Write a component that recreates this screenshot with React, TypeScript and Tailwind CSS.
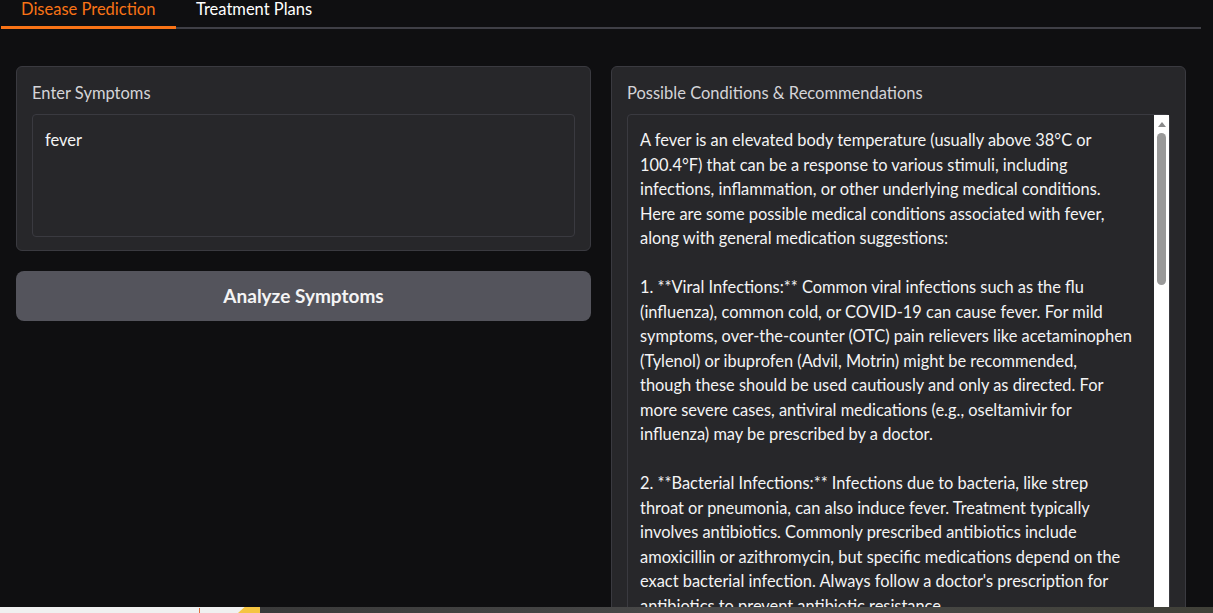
const lines1 = [
  "A fever is an elevated body temperature (usually above 38°C or",
  "100.4°F) that can be a response to various stimuli, including",
  "infections, inflammation, or other underlying medical conditions.",
  "Here are some possible medical conditions associated with fever,",
  "along with general medication suggestions:",
  "",
  "1. **Viral Infections:** Common viral infections such as the flu",
  "(influenza), common cold, or COVID-19 can cause fever. For mild",
  "symptoms, over-the-counter (OTC) pain relievers like acetaminophen",
  "(Tylenol) or ibuprofen (Advil, Motrin) might be recommended,",
  "though these should be used cautiously and only as directed. For",
  "more severe cases, antiviral medications (e.g., oseltamivir for",
  "influenza) may be prescribed by a doctor.",
  "",
  "2. **Bacterial Infections:** Infections due to bacteria, like strep",
  "throat or pneumonia, can also induce fever. Treatment typically",
  "involves antibiotics. Commonly prescribed antibiotics include",
  "amoxicillin or azithromycin, but specific medications depend on the",
  "exact bacterial infection. Always follow a doctor's prescription for",
  "antibiotics to prevent antibiotic resistance.",
];

export default function App() {
  return (
    <div className="relative h-[613px] w-[1213px] overflow-hidden bg-[#0f0f11] font-['Lato',sans-serif] text-[#f4f4f5]">
      {/* tabs */}
      <div className="ml-px mr-[12px] -mt-[4px] flex h-[33px] border-b-2 border-[#3f3f46]">
        <div className="-mb-[2px] w-[175px] border-b-[3px] border-[#f97316] pl-5 text-[16.5px] leading-[26px] text-[#f97316]">
          Disease Prediction
        </div>
        <div className="pl-5 text-[16.5px] leading-[26px] text-white">Treatment Plans</div>
      </div>

      <div className="mt-[37px] flex gap-[20px] px-4">
        {/* left column */}
        <div className="flex w-[575px] flex-col gap-[20px]">
          <div className="rounded-md border border-[#3a3a40] bg-[#27272a] px-[15px] pt-[15px] pb-[13px]">
            <div className="text-[16.5px] leading-[22px] text-[#d4d4d8]">Enter Symptoms</div>
            <div className="mt-[10px] h-[123px] rounded-[4px] border border-[#3a3a40] bg-[#27272a] px-[12px] pt-[13px] text-[16.5px] leading-[24px]">
              fever
            </div>
          </div>
          <button className="h-[50px] rounded-lg bg-[#54545c] text-[19px] font-bold text-[#f4f4f5]">
            Analyze Symptoms
          </button>
        </div>

        {/* right column */}
        <div className="w-[575px] rounded-md border border-[#3a3a40] bg-[#27272a] px-[15px] pt-[15px]">
          <div className="text-[16.5px] leading-[22px] text-[#d4d4d8]">Possible Conditions &amp; Recommendations</div>
          <div className="relative mt-[10px] h-[600px] rounded-[4px] border border-[#3a3a40] bg-[#27272a] pl-[12px] pt-[13px]">
            {lines1.map((l, i) => (
              <div key={i} className="h-[24.5px] whitespace-nowrap text-[16.4px] leading-[24px]">
                {l}
              </div>
            ))}
            <div className="absolute right-0 top-0 bottom-0 w-[15px] bg-white">
              <div className="mx-auto mt-[7px] h-0 w-0 border-x-[4px] border-b-[5px] border-x-transparent border-b-[#8a8a8a]" />
              <div className="mx-auto mt-[6px] h-[152px] w-[9px] rounded-full bg-[#999999]" />
            </div>
          </div>
        </div>
      </div>

      {/* taskbar strip */}
      <div className="absolute bottom-0 left-0 flex h-[6px] w-full">
        <div className="relative w-[260px] bg-[#f0f0f0]">
          <div className="absolute left-[199px] top-[1px] h-[5px] w-[1px] bg-[#e07040]" />
          <div className="absolute left-[238px] top-0 h-[6px] w-[22px] bg-[#f5c542] [clip-path:polygon(30%_0,100%_0,100%_100%,0_100%)]" />
        </div>
        <div className="flex-1 bg-gradient-to-r from-[#3a3a3a] via-[#4a4a4a] to-[#404038]" />
      </div>
    </div>
  );
}
